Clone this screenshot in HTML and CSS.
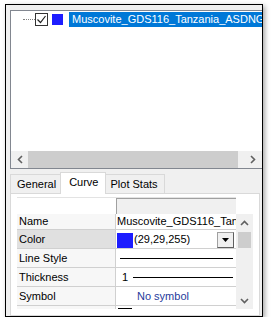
FILE: index.html
```html
<!DOCTYPE html>
<html>
<head>
<meta charset="utf-8">
<link rel="stylesheet" href="styles.css">
</head>
<body>
<div class="window">
  <div class="tree">
    <div class="tree-body">
      <div class="tree-item">
        <span class="dots"></span>
        <span class="check"><svg width="11" height="11" viewBox="0 0 11 11"><path d="M1.5 5.5 L4.5 8.5 L9.5 2" fill="none" stroke="#222" stroke-width="1.2"/></svg></span>
        <span class="swatch blue"></span>
        <span class="sel">Muscovite_GDS116_Tanzania_ASDNG4</span>
      </div>
    </div>
    <div class="hscroll">
      <span class="sbtn"><svg width="6" height="9" viewBox="0 0 6 9"><path d="M5 1 L1.5 4.5 L5 8" fill="none" stroke="#606060" stroke-width="1.6"/></svg></span>
      <div class="htrack"><div class="hthumb"></div></div>
      <span class="sbtn"><svg width="6" height="9" viewBox="0 0 6 9"><path d="M1 1 L4.5 4.5 L1 8" fill="none" stroke="#606060" stroke-width="1.6"/></svg></span>
    </div>
  </div>
  <div class="tabs">
    <div class="tab">General</div>
    <div class="tab active">Curve</div>
    <div class="tab">Plot Stats</div>
  </div>
  <div class="panel">
    <div class="grid">
      <div class="row header">
        <div class="lbl"></div>
        <div class="val hdr"></div>
      </div>
      <div class="row first">
        <div class="lbl">Name</div>
        <div class="val">Muscovite_GDS116_Tanzania</div>
      </div>
      <div class="row selrow">
        <div class="lbl">Color</div>
        <div class="val colorval">
          <span class="swatch2 blue"></span><span class="ctext">(29,29,255)</span>
          <span class="ddbtn"><svg width="7" height="4" viewBox="0 0 7 4"><path d="M0 0 H7 L3.5 4 Z" fill="#000"/></svg></span>
        </div>
      </div>
      <div class="row">
        <div class="lbl">Line Style</div>
        <div class="val"><span class="hline full"></span></div>
      </div>
      <div class="row">
        <div class="lbl">Thickness</div>
        <div class="val"><span class="num">1</span><span class="hline"></span></div>
      </div>
      <div class="row">
        <div class="lbl">Symbol</div>
        <div class="val"><span class="nosym">No symbol</span></div>
      </div>
      <div class="row">
        <div class="lbl">Symbol Color</div>
        <div class="val"><span class="swatch3"></span><span class="gtext">(0,0,0)</span></div>
      </div>
    </div>
    <div class="vscroll">
      <span class="vbtn"><svg width="9" height="6" viewBox="0 0 9 6"><path d="M1 5 L4.5 1.5 L8 5" fill="none" stroke="#606060" stroke-width="1.6"/></svg></span>
      <div class="vtrack"><div class="vthumb"></div></div>
      <span class="vbtn"><svg width="9" height="6" viewBox="0 0 9 6"><path d="M1 1 L4.5 4.5 L8 1" fill="none" stroke="#606060" stroke-width="1.6"/></svg></span>
    </div>
  </div>
</div>
</body>
</html>
```
FILE: styles.css
```css
* { box-sizing: border-box; }
html, body { margin: 0; padding: 0; background: #fff; }
body {
  font-family: "Liberation Sans", Arial, sans-serif;
  font-size: 11px;
  color: #000;
}
.window {
  margin: 4px 0 0 5px;
  width: 258px;
  height: 313px;
  border: 1px solid #000;
  background: #f0f0f0;
  box-shadow: 2px 2px 5px rgba(0,0,0,0.35);
  overflow: hidden;
  padding: 5px 0 0 4px;
  display: flex;
  flex-direction: column;
}
.tree {
  width: 260px;
  height: 159px;
  flex: none;
  border: 1px solid #828790;
  border-right: none;
  background: #fff;
  display: flex;
  flex-direction: column;
}
.tree-body { flex: 1; padding-top: 1px; }
.tree-item {
  display: flex;
  align-items: center;
  height: 15px;
  padding-left: 12px;
}
.dots {
  width: 12px;
  border-top: 1px dotted #808080;
}
.check {
  width: 13px;
  height: 13px;
  border: 1px solid #333;
  background: #fff;
  display: flex;
  align-items: center;
  justify-content: center;
}
.swatch { width: 11px; height: 11px; margin-left: 4px; }
.blue { background: #1d1dff; }
.sel {
  margin-left: 6px;
  background: #0078d7;
  color: #fff;
  height: 15px;
  line-height: 15px;
  padding-left: 3px;
  white-space: nowrap;
  flex: 1;
  overflow: hidden;
  font-size: 11px;
}
.hscroll {
  height: 17px;
  background: #f0f0f0;
  display: flex;
  flex: none;
}
.sbtn {
  width: 17px;
  display: flex;
  align-items: center;
  justify-content: center;
}
.htrack { width: 216px; padding: 0; }
.hthumb { width: 210px; height: 17px; background: #cdcdcd; }
.tabs {
  display: flex;
  align-items: flex-end;
  height: 21px;
  margin-top: 3px;
  padding-left: 1px;
  flex: none;
  position: relative;
  z-index: 1;
}
.tab {
  height: 19px;
  line-height: 18px;
  padding: 0 6px;
  border: 1px solid #d9d9d9;
  border-bottom: none;
  background: #f0f0f0;
  margin-left: -1px;
}
.tab.active {
  height: 22px;
  line-height: 18px;
  margin: 0 -2px -1px -3px;
  padding: 0 7px 0 8px;
  background: #fff;
  position: relative;
  z-index: 2;
}
.panel {
  flex: 1;
  margin-right: 2px;
  border: 1px solid #d9d9d9;
  background: #fff;
  padding: 3px 0 0 6px;
  display: flex;
  align-items: flex-start;
}
.grid {
  width: 219px;
  height: 112px;
  overflow: hidden;
  border-top: 1px solid #e3e3e3;
}
.row {
  display: grid;
  grid-template-columns: 99px 120px;
  height: 19px;
  border-bottom: 1px solid #d0d0d0;
}
.row.header { height: 16px; border-bottom: none; }
.row.first { height: 16px; }
.lbl {
  background: #f7f7f7;
  border-right: 1px solid #d0d0d0;
  padding-left: 2px;
  line-height: 18px;
  white-space: nowrap;
  overflow: hidden;
}
.row.first .lbl, .row.first .val { line-height: 15px; }
.header .lbl { background: #fff; border-right: none; }
.selrow .lbl { background: #e0e0e0; }
.val {
  background: #fff;
  white-space: nowrap;
  overflow: hidden;
  line-height: 18px;
  display: flex;
  align-items: center;
  padding-left: 1px;
}
.val.hdr {
  background: #f0f0f0;
  border-left: 1px solid #a0a0a0;
  border-top: 1px solid #a0a0a0;
}
.colorval { align-items: center; }
.swatch2 { width: 16px; height: 15px; margin-top: 2px; flex: none; }
.ctext { margin-left: 1px; flex: 1; }
.ddbtn {
  width: 17px;
  height: 16px;
  margin-right: 2px;
  margin-top: 2px;
  border: 1px solid #a0a0a0;
  border-right-color: #606060;
  border-bottom-color: #606060;
  background: #f0f0f0;
  display: flex;
  align-items: center;
  justify-content: center;
}
.hline { height: 1px; background: #000; flex: 1; margin: 0 3px 0 5px; }
.hline.full { margin: 0 3px 0 3px; }
.num { margin-left: 5px; }
.nosym { margin-left: 20px; color: #1f3b9c; }
.swatch3 { width: 14px; height: 14px; background: #000; margin-left: 1px; flex: none; }
.gtext { color: #909090; margin-left: 2px; }
.vscroll {
  width: 17px;
  height: 95px;
  margin-top: 17px;
  background: #f0f0f0;
  display: flex;
  flex-direction: column;
}
.vbtn {
  height: 17px;
  display: flex;
  align-items: center;
  justify-content: center;
}
.vtrack { flex: 1; padding-top: 1px; }
.vthumb { width: 13px; height: 16px; margin-left: 2px; background: #cdcdcd; }
```
